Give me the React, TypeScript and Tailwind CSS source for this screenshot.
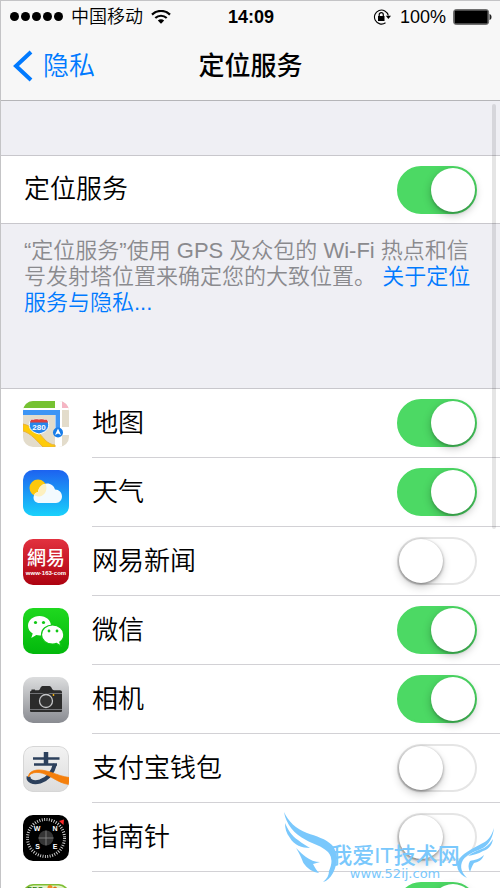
import React, { useState } from 'react';
import { clsx } from 'clsx';

interface AppEntry {
  id: string;
  name: string;
  icon: React.ReactNode;
  enabled: boolean;
}

interface ToggleProps {
  id: string;
  checked: boolean;
  onChange: (checked: boolean) => void;
}

const Toggle = ({ id, checked, onChange }: ToggleProps) => {
  return (
    <input
      id={id}
      type="checkbox"
      role="switch"
      checked={checked}
      onChange={(e) => onChange(e.target.checked)}
      className={clsx(
        'relative flex h-12 w-20 shrink-0 cursor-pointer appearance-none items-center rounded-full border-2',
        'before:block before:size-11 before:rounded-full before:bg-white before:content-[""]',
        checked
          ? 'justify-end border-[#4cd964] bg-[#4cd964] before:shadow-[0_3px_8px_rgba(0,0,0,0.25),0_2px_2px_rgba(0,0,0,0.15)]'
          : 'border-[#e5e5e5] bg-white before:shadow-[0_4px_8px_rgba(0,0,0,0.2),0_1px_3px_rgba(0,0,0,0.4)]'
      )}
    />
  );
};

/* App icons */

const MapsIcon = () => (
  <svg viewBox="0 0 46 46" className="size-full" aria-hidden="true">
    <rect width="46" height="46" fill="#e3dccb" />
    <path d="M0 0H32V7H0Z" fill="#76c232" />
    <path d="M39 0H46V7H39Z" fill="#f5b5c3" />
    <path d="M0 7H46V9H0Z" fill="#fff" />
    <path d="M32 0H39V46H32Z" fill="#fff" />
    <path d="M39 26H46V34H39Z" fill="#fff" />
    <path d="M0 23C10 25 17 33 22 39C25 42 29 44 32 44V46H20C15 41 8 32 0 30Z" fill="#fecb09" stroke="#e9b23a" strokeWidth="1" />
    <path d="M0 9H37V31H32.500V14H0Z" fill="#3d95f5" />
    <path d="M8 18.500C10 19.500 12 17.500 16 18.500C20 17.500 22 19.500 24 18.500C28 25 25 31 16 33C7 31 4 25 8 18.500Z" fill="#2586ed" stroke="#fff" strokeWidth="1" />
    <path d="M8 18.500C10 19.500 12 17.500 16 18.500C20 17.500 22 19.500 24 18.500L25 21.500H7Z" fill="#dd3f3d" />
    <text x="16" y="28.500" textAnchor="middle" fill="#fff" fontSize="8" fontWeight="bold">280</text>
    <circle cx="35" cy="31.500" r="5" fill="#177de9" />
    <path d="M35 27.500L38 34L35 32.500L32 34Z" fill="#fff" />
  </svg>
);

const WeatherIcon = () => (
  <svg viewBox="0 0 46 46" className="size-full" aria-hidden="true">
    <defs>
      <linearGradient id="sky" x1="0" y1="0" x2="0" y2="1">
        <stop offset="0" stopColor="#1d62f0" />
        <stop offset="1" stopColor="#1ad1fb" />
      </linearGradient>
    </defs>
    <rect width="46" height="46" fill="url(#sky)" />
    <circle cx="15" cy="18" r="8.500" fill="#fdc80c" />
    <path d="M16.500 33C12.500 33 10.500 30.500 10.500 27.500C10.500 25 12.500 22.500 15 22C15.500 17 19.500 13.500 24 13.500C28 13.500 31 16 32 19.500C36 19.500 39 22.500 39 26.500C39 30 36.500 33 33 33Z" fill="#f3fafe" />
    <path d="M15 22C15.500 18 18.500 14.500 22.500 13.700C25 19 22.500 25.500 16.500 26.500C14.500 26.600 12.500 26 11 25C11.500 23.500 13 22.300 15 22Z" fill="#fdf0c0" />
  </svg>
);

const NetEaseIcon = () => (
  <svg viewBox="0 0 46 46" className="size-full" aria-hidden="true">
    <defs>
      <linearGradient id="crimson" x1="0" y1="0" x2="0" y2="1">
        <stop offset="0" stopColor="#e2313f" />
        <stop offset="1" stopColor="#ad0210" />
      </linearGradient>
    </defs>
    <rect width="46" height="46" fill="url(#crimson)" />
    <text x="23" y="26" textAnchor="middle" fill="#fff" fontSize="19" fontWeight="500">網易</text>
    <text x="23" y="36" textAnchor="middle" fill="#fff" fontSize="6" fontWeight="bold">www·163·com</text>
  </svg>
);

const WeChatIcon = () => (
  <svg viewBox="0 0 46 46" className="size-full" aria-hidden="true">
    <defs>
      <linearGradient id="chat" x1="0" y1="0" x2="0" y2="1">
        <stop offset="0" stopColor="#1fd81f" />
        <stop offset="1" stopColor="#02b80c" />
      </linearGradient>
    </defs>
    <rect width="46" height="46" fill="url(#chat)" />
    <path d="M16.500 8C10 8 5 12.300 5 17.700C5 21 6.800 23.800 9.700 25.500L8.300 30L13.300 27C14.500 27.300 15.500 27.400 17 27.400C23 27.400 28 23 28 17.700C28 12.300 23 8 16.500 8Z" fill="#fff" />
    <path d="M29.500 17C23.400 17 18.500 21.300 18.500 26.700C18.500 32 23.400 36 29.500 36C31 36 32.300 35.800 33.500 35.400L38 38L36.800 34C39.300 32.300 40.800 29.800 40.800 26.700C40.800 21.300 35.800 17 29.500 17Z" fill="#fff" stroke="#10c815" strokeWidth="1.200" />
    <g fill="#10c815">
      <circle cx="12.500" cy="14.500" r="1.600" />
      <circle cx="20.500" cy="14.500" r="1.600" />
      <circle cx="26" cy="23" r="1.400" />
      <circle cx="34" cy="23" r="1.400" />
    </g>
  </svg>
);

const CameraIcon = () => (
  <svg viewBox="0 0 46 46" className="size-full" aria-hidden="true">
    <defs>
      <linearGradient id="steel" x1="0" y1="0" x2="0" y2="1">
        <stop offset="0" stopColor="#dcddde" />
        <stop offset="1" stopColor="#898b91" />
      </linearGradient>
    </defs>
    <rect width="46" height="46" fill="url(#steel)" />
    <path d="M7 15.500C7 14.500 7.500 14 8.500 13.500V12.500H12V13.300H15.500C17 13.300 17.500 9 19.500 9H26.500C28.500 9 29 13.300 31 13.300H37C38.200 13.300 39 14.200 39 15.300V33.500C39 34.500 38.500 35 37.500 35H8.500C7.500 35 7 34.500 7 33.500Z" fill="#2b2b2b" />
    <path d="M7 16.500H39M7 32.500H39" stroke="#85878a" strokeWidth="0.800" />
    <circle cx="23" cy="24" r="8" fill="#2b2b2b" />
    <circle cx="23" cy="24" r="6.500" fill="#333" stroke="#c4c5c7" strokeWidth="1.300" />
    <circle cx="30.500" cy="18" r="0.900" fill="#fdb913" />
  </svg>
);

const AlipayIcon = () => (
  <svg viewBox="0 0 46 46" className="size-full" aria-hidden="true">
    <defs>
      <linearGradient id="pearl" x1="0" y1="0" x2="0" y2="1">
        <stop offset="0" stopColor="#f3f3f3" />
        <stop offset="1" stopColor="#dcdcdc" />
      </linearGradient>
    </defs>
    <rect width="46" height="46" fill="url(#pearl)" />
    <rect x="0.500" y="0.500" width="45" height="45" rx="9.500" fill="none" stroke="#d6d6d6" />
    <g fill="none" stroke="#2c405c">
      <path d="M10 12.500H36.500" strokeWidth="2.600" />
      <path d="M23 6V18" strokeWidth="4.500" />
      <path d="M11 18.500H34" strokeWidth="2.600" />
      <path d="M32 18C30 26 25 33 17 35.500C10 37.500 5 35 5.500 30.500" strokeWidth="4" />
    </g>
    <path d="M5.500 31C5.500 26.500 10 24 16 24C26 24 34 30 46 31.500V38.500C34 37 26 27.500 16 26.500C10 26 6.500 28 5.500 31Z" fill="#f57f0b" stroke="#f57f0b" strokeWidth="0.800" />
  </svg>
);

const CompassIcon = () => (
  <svg viewBox="0 0 46 46" className="size-full" aria-hidden="true">
    <rect width="46" height="46" fill="#000" />
    <circle cx="23" cy="23" r="18.500" fill="none" stroke="#d8d8d8" strokeWidth="3" strokeDasharray="0.900 1.522" />
    <circle cx="23" cy="23" r="7.500" fill="#353535" />
    <path d="M23 15.500V30.500M15.500 23H30.500" stroke="#8a8a8a" strokeWidth="0.800" />
    <g fill="#fff" fontSize="7" fontWeight="bold" textAnchor="middle">
      <text x="14" y="16">W</text>
      <text x="32" y="16">N</text>
      <text x="14.500" y="34">S</text>
      <text x="32" y="34">E</text>
    </g>
    <path d="M36 6L41 4.500L40.500 10Z" fill="#fb2b2b" />
  </svg>
);

const PpsIcon = () => (
  <svg viewBox="0 0 46 46" className="size-full" aria-hidden="true">
    <rect width="46" height="46" fill="#7fbf35" />
    <rect x="1.500" y="1.500" width="43" height="43" rx="9" fill="#e3f3c8" />
    <text x="4" y="8" fill="#2f7a1b" fontSize="8" fontWeight="bold">PPS</text>
    <circle cx="27" cy="3.500" r="2.500" fill="#ef8a25" />
    <circle cx="32" cy="4.500" r="2" fill="#e06d1c" />
    <path d="M22 9C26 4 32 4 36 9Z" fill="#4e9a2b" />
  </svg>
);

/* Status bar icons */

const WifiIcon = () => (
  <svg viewBox="0 0 20 14" className="h-3.5 w-5" aria-hidden="true">
    <path d="M1 4.600C6 -0.300 14 -0.300 19 4.600" fill="none" stroke="#000" strokeWidth="2.200" />
    <path d="M4.300 8C7.500 5 12.500 5 15.700 8" fill="none" stroke="#000" strokeWidth="2.200" />
    <path d="M6.800 10.500C8.600 8.900 11.400 8.900 13.200 10.500L10 13.700Z" fill="#000" />
  </svg>
);

const RotationLockIcon = () => (
  <svg viewBox="0 0 18 16" className="h-4 w-[18px]" aria-hidden="true">
    <path d="M15.300 6.500A7 7 0 1 0 12.500 13.800" fill="none" stroke="#000" strokeWidth="1.100" />
    <path d="M12.800 6.800H18L15.400 10Z" fill="#000" />
    <rect x="5" y="7" width="6.500" height="5" fill="#000" />
    <path d="M6.200 7.500V5.700A2 2 0 0 1 10.300 5.700V7.500" fill="none" stroke="#000" strokeWidth="1.200" />
  </svg>
);

const BatteryIcon = () => (
  <svg viewBox="0 0 39 16" className="h-4 w-[39px]" aria-hidden="true">
    <rect x="0.600" y="0.600" width="35" height="14.800" rx="2.500" fill="#999" stroke="#666" strokeWidth="1" />
    <rect x="1.600" y="1.600" width="33" height="12.800" rx="1" fill="#000" />
    <path d="M36.500 5C38 5.500 38.500 6.500 38.500 8C38.500 9.500 38 10.500 36.500 11Z" fill="#222" />
  </svg>
);

const StatusBar = () => (
  <div className="grid h-[31px] grid-cols-[1fr_auto_1fr] items-center pr-2 pl-[9px] text-lg leading-none">
    <div className="flex items-center gap-2">
      <div className="flex gap-0.5">
        {[0, 1, 2, 3, 4].map((dot) => (
          <span key={dot} className="size-[9px] rounded-full bg-black" />
        ))}
      </div>
      <span className="font-[350]">中国移动</span>
      <WifiIcon />
    </div>
    <span className="font-bold">14:09</span>
    <div className="flex items-center justify-end gap-[7px]">
      <RotationLockIcon />
      <span className="pl-0.5">100%</span>
      <BatteryIcon />
    </div>
  </div>
);

const Watermark = () => (
  <div className="pointer-events-none absolute right-1 bottom-1 flex w-[212px] justify-center text-[#7ac8fc]">
    <svg viewBox="0 0 212 72" className="absolute inset-x-0 bottom-0 h-[72px] w-full" fill="currentColor" aria-hidden="true">
      <path d="M0 0C4 9 12 17 23 21C32 24 42 27 48 33C54 40 54 52 49 61C46 66 43 69 39 70C43 67 45 63 45 59C48 52 49 46 44 40C38 34 29 32 22 28C10 22 2 12 0 0Z" />
      <path d="M1 11C4 18 8 24 14 28C19 32 23 34 26 36C18 36 10 33 6 26C2 21 1 16 1 11Z" />
      <path d="M12 36C16 40 19 43 22 45C26 48 31 50 36 50L29 52C31 56 33 59 35 61C29 60 24 57 21 53C18 50 19 47 12 36Z" />
      <path d="M210 16C207 25 204 29 197 32C190 36 181 40 176 46C170 53 174 62 183 66C178 61 175 55 179 48C184 41 193 39 199 36C206 32 209 24 210 16Z" />
      <path d="M209 27C208 33 205 37 199 39C194 42 189 43 184 44C189 40 195 38 200 36C205 33 207 30 209 27Z" />
      <path d="M200 43C198 48 195 50 190 51C188 54 187 57 186 60C184 56 184 52 186 49C190 48 196 47 200 43Z" />
    </svg>
    <div className="flex flex-col items-center pb-1 pl-2.5">
      <span className="text-[22px] leading-6 font-medium">我爱IT技术网</span>
      <span className="font-['DejaVu_Sans'] text-[13px] leading-3">www.52ij.com</span>
    </div>
  </div>
);

const initialApps: AppEntry[] = [
  { id: 'maps', name: '地图', icon: <MapsIcon />, enabled: true },
  { id: 'weather', name: '天气', icon: <WeatherIcon />, enabled: true },
  { id: 'netease', name: '网易新闻', icon: <NetEaseIcon />, enabled: false },
  { id: 'wechat', name: '微信', icon: <WeChatIcon />, enabled: true },
  { id: 'camera', name: '相机', icon: <CameraIcon />, enabled: true },
  { id: 'alipay', name: '支付宝钱包', icon: <AlipayIcon />, enabled: false },
  { id: 'compass', name: '指南针', icon: <CompassIcon />, enabled: false },
  { id: 'pps', name: 'PPS影音', icon: <PpsIcon />, enabled: true },
];

export default function App() {
  const [locationOn, setLocationOn] = useState(true);
  const [apps, setApps] = useState(initialApps);

  const setEnabled = (id: string, enabled: boolean) => {
    setApps(apps.map((app) => (app.id === id ? { ...app, enabled } : app)));
  };

  return (
    <div className="relative flex h-screen flex-col overflow-hidden border-t border-l border-[#c4c4c6] bg-[#efeff4] font-['Liberation_Sans','Noto_Sans_CJK_SC',sans-serif] text-black">
      <header className="shrink-0 border-b border-[#b5b5b8] bg-[#f7f7f7]">
        <StatusBar />
        <nav className="grid h-[68px] grid-cols-[1fr_auto_1fr] items-center px-3 text-[26px]">
          <a href="#privacy" className="flex items-center gap-2.5 font-[350] text-[#007aff]">
            <svg viewBox="0 0 20 32" className="h-8 w-5" aria-hidden="true">
              <path d="M18 2L3 16L18 30" fill="none" stroke="currentColor" strokeWidth="4" />
            </svg>
            隐私
          </a>
          <h1 className="font-medium">定位服务</h1>
        </nav>
      </header>

      <main className="min-h-0 flex-1 overflow-y-auto [scrollbar-width:none]">
        {/* Master switch */}
        <div className="mt-[54px] flex h-[69px] items-center justify-between border-y border-[#c8c7cc] bg-white px-[23px]">
          <label htmlFor="location" className="text-[26px] font-[350]">定位服务</label>
          <Toggle id="location" checked={locationOn} onChange={setLocationOn} />
        </div>
        <p className="px-[23px] pt-3.5 text-[22px] leading-[26px] font-[350] text-[#8a8a8e]">
          “定位服务”使用 GPS 及众包的 Wi-Fi 热点和信号发射塔位置来确定您的大致位置。{' '}
          <a href="#about" className="text-[#007aff]">关于定位服务与隐私...</a>
        </p>

        {/* Per-app switches */}
        <ul className="mt-[72px] border-t border-[#c8c7cc] bg-white">
          {apps.map((app) => (
            <li key={app.id} className="flex h-[69px] items-center gap-[23px] pl-[22px]">
              <div className="size-[46px] shrink-0 overflow-hidden rounded-[10px]">{app.icon}</div>
              <div className="flex h-full flex-1 items-center justify-between border-b border-[#d2d1d5] pr-[23px]">
                <label htmlFor={app.id} className="text-[26px] font-[350]">{app.name}</label>
                <Toggle id={app.id} checked={app.enabled} onChange={(on) => setEnabled(app.id, on)} />
              </div>
            </li>
          ))}
        </ul>
      </main>

      {/* Scroll indicator */}
      <div className="pointer-events-none absolute top-[103px] right-1 h-[425px] w-1 rounded-full bg-black/10" />
      <Watermark />
    </div>
  );
}
